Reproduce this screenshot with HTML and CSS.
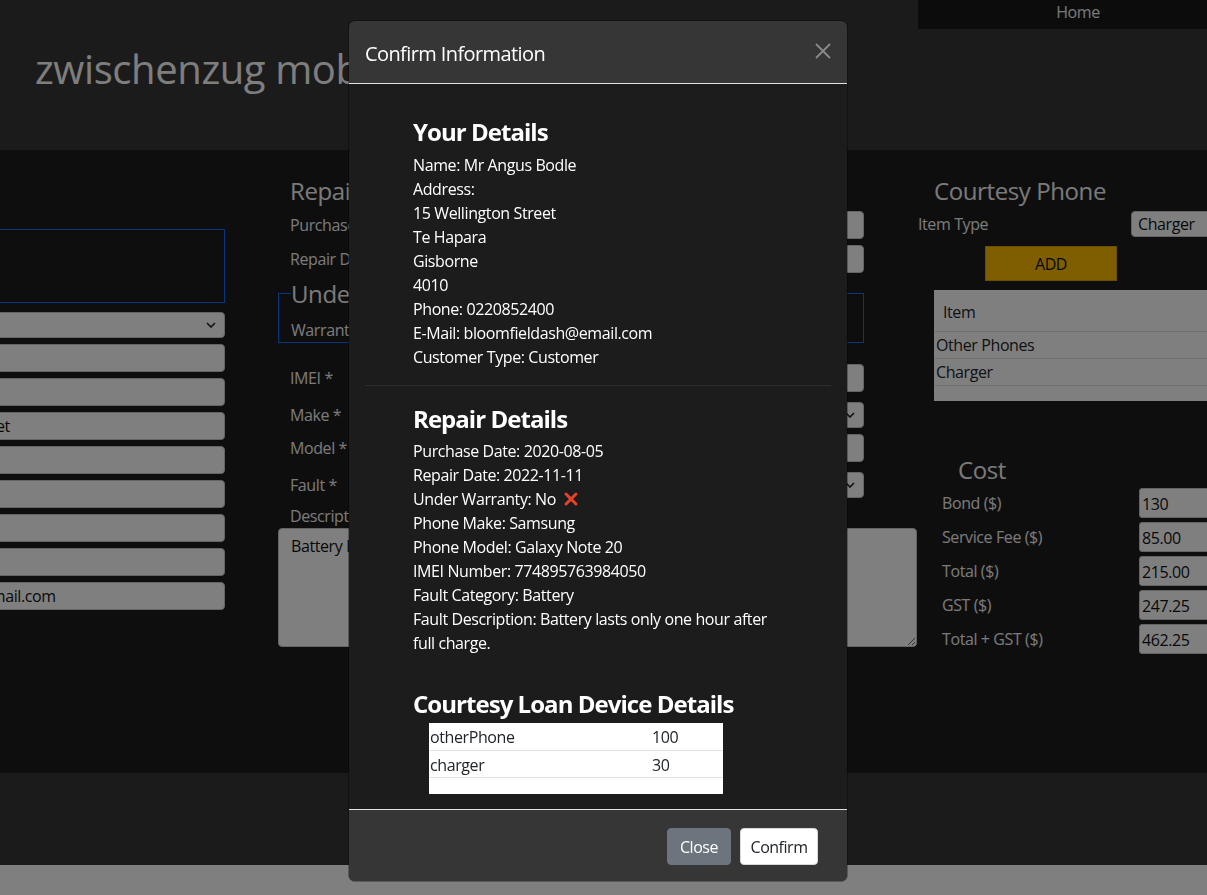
FILE: index.html
```html
<!DOCTYPE html>
<html lang="en">
<head>
<meta charset="utf-8">
<title>zwischenzug mobile</title>
<link rel="stylesheet" href="styles.css">
</head>
<body>
<div class="page">
  <header class="site-header">
    <nav class="top-nav"><a class="nav-link" href="#">Home</a></nav>
    <h1 class="brand">zwischenzug mobile repairs</h1>
  </header>

  <main class="main">
    <section class="col col-customer">
      <div class="box-type"></div>
      <div class="field select sel-left"><span class="sel-text">Mr</span>
        <svg class="chev" width="10" height="6" viewBox="0 0 10 6"><path d="M1 1l4 4 4-4" fill="none" stroke="#222" stroke-width="1.6"/></svg>
      </div>
      <input class="field" value="Angus" readonly>
      <input class="field" value="Bodle" readonly>
      <input class="field" value="15 Wellington Street" readonly>
      <input class="field" value="Te Hapara" readonly>
      <input class="field" value="Gisborne" readonly>
      <input class="field" value="4010" readonly>
      <input class="field" value="0220852400" readonly>
      <input class="field" value="bloomfieldash@email.com" readonly>
    </section>

    <section class="col col-repair">
      <h2 class="sec-title">Repair Details</h2>
      <div class="form-row"><label>Purchase Date</label><input class="field row-field" value="2020-08-05" readonly></div>
      <div class="form-row"><label>Repair Date</label><input class="field row-field" value="2022-11-11" readonly></div>
      <fieldset class="warranty">
        <legend>Under Warranty</legend>
        <div class="fs-label">Warranty</div>
      </fieldset>
      <div class="form-row mt-21"><label>IMEI *</label><input class="field row-field" value="774895763984050" readonly></div>
      <div class="form-row sel-row mt-10"><label>Make *</label>
        <div class="field select row-field"><span class="sel-text">Samsung</span>
          <svg class="chev" width="10" height="6" viewBox="0 0 10 6"><path d="M1 1l4 4 4-4" fill="none" stroke="#222" stroke-width="1.6"/></svg>
        </div>
      </div>
      <div class="form-row mt-5"><label>Model *</label><input class="field row-field" value="Galaxy Note 20" readonly></div>
      <div class="form-row sel-row mt-10"><label>Fault *</label>
        <div class="field select row-field"><span class="sel-text">Battery</span>
          <svg class="chev" width="10" height="6" viewBox="0 0 10 6"><path d="M1 1l4 4 4-4" fill="none" stroke="#222" stroke-width="1.6"/></svg>
        </div>
      </div>
      <div class="desc-label">Description</div>
      <textarea class="field textarea" readonly>Battery lasts only one hour after full charge.</textarea>
    </section>

    <section class="col col-courtesy">
      <h2 class="sec-title courtesy-title">Courtesy Phone</h2>
      <div class="item-row">
        <label>Item Type</label>
        <div class="field select item-select"><span class="sel-text">Charger</span></div>
      </div>
      <button class="btn-add" type="button">ADD</button>
      <table class="item-table">
        <thead><tr><th>Item</th></tr></thead>
        <tbody>
          <tr><td>Other Phones</td></tr>
          <tr><td>Charger</td></tr>
          <tr class="empty-row"><td></td></tr>
        </tbody>
      </table>

      <h2 class="sec-title cost-title">Cost</h2>
      <div class="cost-row"><label>Bond ($)</label><input class="cost-field" value="130" readonly></div>
      <div class="cost-row"><label>Service Fee ($)</label><input class="cost-field" value="85.00" readonly></div>
      <div class="cost-row"><label>Total ($)</label><input class="cost-field" value="215.00" readonly></div>
      <div class="cost-row"><label>GST ($)</label><input class="cost-field" value="247.25" readonly></div>
      <div class="cost-row"><label>Total + GST ($)</label><input class="cost-field" value="462.25" readonly></div>
    </section>
  </main>

  <footer class="site-footer"></footer>
</div>

<div class="backdrop"></div>

<div class="modal" role="dialog" aria-labelledby="modal-title">
  <div class="modal-header">
    <h5 class="modal-title" id="modal-title">Confirm Information</h5>
    <button class="btn-close" type="button" aria-label="Close">
      <svg width="16" height="16" viewBox="0 0 16 16"><path d="M1 1L15 15M15 1L1 15" stroke="#8a8a8a" stroke-width="1.8" fill="none"/></svg>
    </button>
  </div>
  <div class="modal-body">
    <div class="info first">
      <h3>Your Details</h3>
      <p>Name: Mr Angus Bodle</p>
      <p>Address:</p>
      <p>15 Wellington Street</p>
      <p>Te Hapara</p>
      <p>Gisborne</p>
      <p>4010</p>
      <p>Phone: 0220852400</p>
      <p>E-Mail: bloomfieldash@email.com</p>
      <p>Customer Type: Customer</p>
    </div>
    <hr class="divider">
    <div class="info second">
      <h3>Repair Details</h3>
      <p>Purchase Date: 2020-08-05</p>
      <p>Repair Date: 2022-11-11</p>
      <p>Under Warranty: No <svg class="cross" width="16" height="16" viewBox="0 0 16 16"><path d="M3 3L13 13M13 3L3 13" stroke="#e5422c" stroke-width="3" stroke-linecap="round"/></svg></p>
      <p>Phone Make: Samsung</p>
      <p>Phone Model: Galaxy Note 20</p>
      <p>IMEI Number: 774895763984050</p>
      <p>Fault Category: Battery</p>
      <p>Fault Description: Battery lasts only one hour after full charge.</p>
    </div>
    <div class="info third">
      <h3>Courtesy Loan Device Details</h3>
      <table class="loan-table">
        <tbody>
          <tr><td class="c1">otherPhone</td><td>100</td></tr>
          <tr><td class="c1">charger</td><td>30</td></tr>
          <tr class="loan-empty"><td></td><td></td></tr>
        </tbody>
      </table>
    </div>
  </div>
  <div class="modal-footer">
    <button class="btn btn-secondary" type="button">Close</button>
    <button class="btn btn-light" type="button">Confirm</button>
  </div>
</div>
</body>
</html>
```

FILE: styles.css
```css
* { box-sizing: border-box; }

html, body { margin: 0; }

body {
  background: #ffffff;
  font-family: "Open Sans", "Noto Sans", sans-serif;
  font-size: 16px;
  line-height: 24px;
  letter-spacing: -0.025em;
  color: #f5f5f5;
  overflow: hidden;
  height: 895px;
}

.page { width: 1207px; }

/* ---------- header ---------- */
.site-header {
  height: 150px;
  background: #363636;
  display: flex;
  flex-direction: column;
}

.top-nav {
  align-self: flex-end;
  width: 289px;
  height: 29px;
  background: #181818;
  display: flex;
  justify-content: center;
  padding-left: 31px;
}

.nav-link {
  color: #f2f2f2;
  text-decoration: none;
  line-height: 24px;
}

.brand {
  margin: 16px 0 0 35px;
  font-size: 40px;
  line-height: 48px;
  font-weight: 400;
  color: #fcfcfc;
  white-space: nowrap;
  letter-spacing: -0.01em;
}

/* ---------- main ---------- */
.main {
  height: 623px;
  background: #1c1c1c;
  display: flex;
  overflow: hidden;
}

.col { flex: none; }

.col-customer {
  width: 365px;
  margin-left: -140px;
  padding-top: 79px;
}

.box-type {
  height: 74px;
  border: 1px solid #0d6efd;
  margin-bottom: 9px;
}

.field {
  display: block;
  width: 100%;
  height: 28px;
  margin: 0 0 6px;
  padding: 0 6px;
  background: #ffffff;
  border: 1px solid #c8c8c8;
  border-radius: 4px;
  font-family: inherit;
  font-size: 16px;
  letter-spacing: inherit;
  color: #111;
  line-height: 26px;
  outline: none;
}

.select {
  display: flex;
  align-items: center;
  justify-content: space-between;
  padding: 0 8px 0 6px;
}

.sel-left { height: 26px; }

.chev { flex: none; }

/* repair column */
.col-repair {
  width: 639px;
  margin-left: 53px;
  padding-top: 26px;
}

.sec-title {
  margin: 0 0 6px;
  padding-left: 12px;
  font-size: 24px;
  line-height: 29px;
  font-weight: 400;
  color: #f5f5f5;
  white-space: nowrap;
}

.form-row {
  width: 586px;
  height: 28px;
  margin-bottom: 6px;
  display: flex;
  align-items: center;
  justify-content: space-between;
}

.form-row label { padding-left: 12px; }

.row-field {
  width: 330px;
  margin: 0;
}

.sel-row { height: 26px; }
.sel-row .row-field { height: 26px; }

.mt-5 { margin-top: 5px; }
.mt-10 { margin-top: 10px; }
.mt-21 { margin-top: 21px; }

.warranty {
  width: 586px;
  margin: 0;
  padding: 0 12px;
  border: 1px solid #0d6efd;
}

.warranty legend {
  padding: 0;
  margin: 0;
  font-size: 24px;
  line-height: 29px;
  color: #f5f5f5;
}

.fs-label { margin-top: 10px; line-height: 24px; }

.desc-label {
  margin-top: 6px;
  padding-left: 12px;
  line-height: 24px;
}

.textarea {
  width: 639px;
  height: 119px;
  margin: 0;
  padding: 5px 12px;
  line-height: 24px;
  resize: both;
}

/* courtesy column */
.col-courtesy {
  width: 300px;
  margin-left: 1px;
  padding-top: 26px;
}

.courtesy-title { padding-left: 16px; }

.item-row {
  display: flex;
  align-items: center;
  height: 26px;
}

.item-row label { width: 213px; flex: none; }

.item-select {
  width: 90px;
  height: 26px;
  margin: 0;
}

.btn-add {
  display: block;
  margin: 9px 0 0 67px;
  width: 132px;
  height: 35px;
  background: #fdbd00;
  border: 1px solid #d49f00;
  color: #111;
  font-family: inherit;
  font-size: 16px;
  letter-spacing: inherit;
  padding: 0;
}

.item-table {
  margin: 9px 0 0 16px;
  width: 300px;
  background: #ffffff;
  border-collapse: collapse;
  color: #212529;
}

.item-table th {
  text-align: left;
  font-weight: 400;
  height: 41px;
  padding: 4px 9px 0;
  border-bottom: 1px solid #dee2e6;
}

.item-table td {
  height: 27px;
  padding: 1px 2px 0;
  border-bottom: 1px solid #dee2e6;
  line-height: 24px;
}

.item-table .empty-row td { height: 16px; border-bottom: 0; }

.cost-title {
  margin: 54px 0 4px;
  padding-left: 40px;
}

.cost-row {
  display: flex;
  align-items: center;
  height: 30px;
  margin-bottom: 4px;
}

.cost-row label {
  width: 221px;
  flex: none;
  padding-left: 24px;
}

.cost-field {
  width: 80px;
  height: 30px;
  padding: 2px 2px 0;
  background: #ffffff;
  border: 1px solid #c8c8c8;
  border-radius: 3px;
  font-family: inherit;
  font-size: 16px;
  letter-spacing: inherit;
  color: #111;
  outline: none;
}

/* footer */
.site-footer {
  height: 92px;
  background: #363636;
}

/* ---------- modal ---------- */
.backdrop {
  position: fixed;
  inset: 0;
  background: rgba(0, 0, 0, 0.5);
}

.modal {
  position: fixed;
  top: 21px;
  left: 349px;
  width: 498px;
  background: #1c1c1c;
  border-radius: 6px;
  overflow: hidden;
  color: #ffffff;
  box-shadow: 0 0 0 1px rgba(0, 0, 0, 0.3);
}

.modal-header {
  height: 63px;
  background: #363636;
  border-bottom: 1px solid #e2e2e2;
  display: flex;
  align-items: center;
  justify-content: space-between;
  padding: 3px 16px 0;
}

.modal-title {
  margin: 0;
  font-size: 20px;
  line-height: 30px;
  font-weight: 400;
  letter-spacing: -0.03em;
}

.btn-close {
  width: 16px;
  height: 16px;
  padding: 0;
  border: 0;
  background: transparent;
  display: flex;
  margin-top: -6px;
}

.modal-body { padding: 16px 16px 15px; }

.info { padding: 0 48px; }
.info.first { padding-top: 17px; }
.info.second { padding-top: 18px; }
.info.third { padding-top: 34px; }

.info h3 {
  margin: 0 0 7px;
  font-size: 24px;
  line-height: 29px;
  font-weight: 700;
  letter-spacing: -0.04em;
  white-space: nowrap;
}

.info.second h3 { margin-bottom: 6px; }
.info.third h3 { margin-bottom: 5px; }

.info p { margin: 0; line-height: 24px; }

.cross {
  vertical-align: -2px;
  margin-left: 3px;
}

.divider {
  margin: 16px 0 0;
  border: 0;
  border-top: 1px solid #2c2c2c;
  height: 0;
}

.loan-table {
  margin-left: 16px;
  width: 294px;
  background: #ffffff;
  color: #212529;
  border-collapse: collapse;
}

.loan-table td {
  height: 27px;
  padding: 2px 1px 0;
  border-bottom: 1px solid #dee2e6;
  line-height: 24px;
}

.loan-table td.c1 { width: 222px; }

.loan-table .loan-empty td { height: 17px; border-bottom: 0; }

.modal-footer {
  height: 72px;
  background: #363636;
  border-top: 1px solid #e2e2e2;
  display: flex;
  justify-content: flex-end;
  align-items: center;
  gap: 9px;
  padding: 2px 29px 0 0;
}

.btn {
  height: 37px;
  padding: 0;
  border-radius: 4px;
  font-family: inherit;
  font-size: 16px;
  letter-spacing: -0.03em;
  line-height: 24px;
}

.btn-secondary {
  width: 64px;
  background: #6c757d;
  border: 1px solid #6c757d;
  color: #ffffff;
}

.btn-light {
  width: 78px;
  background: #ffffff;
  border: 1px solid #d8d8d8;
  color: #212529;
}
```
